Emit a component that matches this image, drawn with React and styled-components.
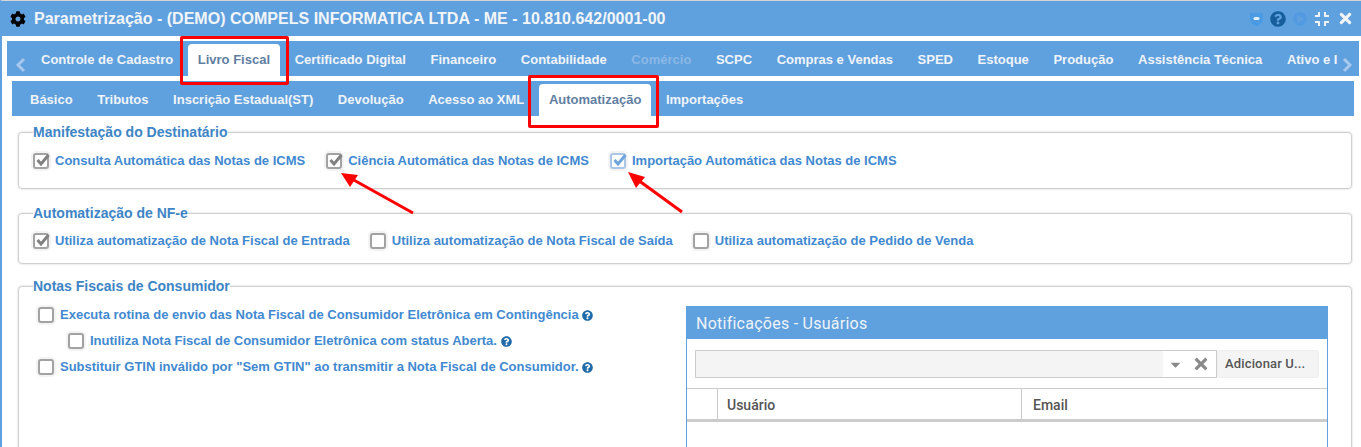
import React from 'react';
import styled, { createGlobalStyle } from 'styled-components';
import { FaCog, FaQuestionCircle, FaPlayCircle, FaCompress, FaTimes, FaCaretDown } from 'react-icons/fa';

const GlobalStyle = createGlobalStyle`
    html, body {
        margin: 0;
        height: 447px;
        overflow: hidden;
        background: #fff;
        font-family: "Liberation Sans", Arial, sans-serif;
    }
`;

const Window = styled.div`
    position: relative;
    height: 447px;
    box-sizing: border-box;
    border-top: 1px solid #d5d5d5;
    border-left: 2px solid #5fa0de;
    overflow: hidden;
`;

const TitleBar = styled.div`
    height: 35px;
    margin-left: -2px;
    padding: 0 7px 0 10px;
    background: #5fa0de;
    display: flex;
    align-items: center;
    color: #f2f5f8;
`;

const Title = styled.div`
    margin-left: 8px;
    font-size: 16px;
    font-weight: bold;
    letter-spacing: 0.015px;
    flex: 1;
    white-space: nowrap;
`;

const TitleIcons = styled.div`
    display: flex;
    align-items: center;
    gap: 7px;
`;

const IconSlot = styled.span`
    display: flex;
    color: ${p => p.$color || '#f2f5f8'};
    font-size: ${p => p.$size || 16}px;
`;

const MainBar = styled.div`
    height: 35px;
    margin: 5px 0 0 5px;
    width: 1352px;
    background: #5fa0de;
    display: flex;
    align-items: flex-end;
    overflow: hidden;
`;

const SubBar = styled.div`
    height: 35px;
    margin: 5px 0 0 10px;
    width: 1342px;
    background: #5fa0de;
    display: flex;
    align-items: flex-end;
    padding-left: 8px;
    box-sizing: border-box;
`;

const Arrow = styled.div`
    width: ${p => p.$width}px;
    flex: none;
    align-self: stretch;
    display: flex;
    align-items: flex-end;
    padding-bottom: 3px;
    padding-left: ${p => p.$pad || 0}px;
    box-sizing: border-box;
`;

const TabStrip = styled.div`
    flex: 1;
    min-width: 0;
    display: flex;
    align-items: flex-end;
    overflow: hidden;
`;

const Tab = styled.div`
    flex: none;
    height: 32px;
    line-height: 31px;
    padding: 0 10px;
    margin-right: 4.6px;
    font-size: 13px;
    font-weight: bold;
    white-space: nowrap;
    border-radius: 4px 4px 0 0;
    background: ${p => (p.$active ? '#fff' : 'transparent')};
    color: ${p => (p.$active ? '#5f7ea1' : p.$disabled ? '#8ab8e6' : '#f0f4f8')};
`;

const Content = styled.div`
    padding: 8px 9px 0 16px;
`;

const Group = styled.fieldset`
    margin: 0 0 ${p => p.$gapBelow || 14}px;
    padding: ${p => p.$top}px 14px 0;
    height: ${p => p.$height}px;
    box-sizing: border-box;
    border: 1px solid #cfcfcf;
    border-radius: 4px;
    box-shadow: 0 0 2px rgba(0, 0, 0, 0.22);
`;

const Legend = styled.legend`
    padding: 0;
    font-size: 14px;
    font-weight: bold;
    line-height: 16px;
    color: #3d85c6;
`;

const Row = styled.div`
    display: flex;
    align-items: center;
    gap: ${p => p.$gap || 0}px;
`;

const Check = styled.label`
    display: flex;
    align-items: center;
    gap: 6px;
    font-size: 13px;
    font-weight: bold;
    line-height: 18px;
    color: #4189d0;
    white-space: nowrap;
`;

const Box = styled.span`
    flex: none;
    width: 16px;
    height: 16px;
    box-sizing: border-box;
    border: 2px solid ${p => (p.$blue ? '#a9c6e6' : '#a2a2a2')};
    border-radius: 3px;
    background: #fff;
    box-shadow: 0 0 0 2px #f3f3f3;
    position: relative;
    svg {
        position: absolute;
        left: 0;
        top: -3px;
    }
`;

const Split = styled.div`
    display: flex;
    justify-content: space-between;
`;

const Options = styled.div`
    display: flex;
    flex-direction: column;
    gap: 8px;
    padding: 2px 0 0 5px;
`;

const Option = styled.div`
    display: flex;
    align-items: center;
    gap: 3px;
    padding-left: ${p => p.$indent || 0}px;
`;

const Help = styled.span`
    display: flex;
    color: #1f6aa8;
    font-size: 11px;
    margin-left: ${p => p.$gap || 0}px;
`;

const Panel = styled.div`
    width: 642px;
    height: 200px;
    margin-top: 2px;
    margin-right: 9px;
    box-sizing: border-box;
    border: 1px solid #5fa0de;
    flex: none;
`;

const PanelHead = styled.div`
    height: 33px;
    margin: -1px -1px 0;
    padding-left: 10px;
    background: #5fa0de;
    color: #eef3f8;
    font-family: Roboto, sans-serif;
    font-size: 16px;
    line-height: 35px;
    letter-spacing: 0.25px;
`;

const PickerRow = styled.div`
    display: flex;
    padding: 11px 8px 10px;
    height: 49px;
    box-sizing: border-box;
`;

const Picker = styled.div`
    flex: 1;
    display: flex;
    align-items: center;
    justify-content: flex-end;
    gap: 9px;
    padding-right: 6px;
    background: linear-gradient(to right, #f4f4f4 467px, #fff 467px);
    border: 1px solid #ccc;
    color: #8a8a8a;
    font-size: 15px;
    svg + svg {
        font-size: 18px;
    }
`;

const AddButton = styled.div`
    width: 102px;
    box-sizing: border-box;
    padding-left: 7px;
    background: #f4f4f4;
    border: 1px solid #eee;
    border-radius: 3px;
    font-family: Roboto, sans-serif;
    font-size: 13px;
    font-weight: 500;
    line-height: 26px;
    letter-spacing: 0.15px;
    color: #555;
    white-space: nowrap;
`;

const TableHead = styled.div`
    display: grid;
    grid-template-columns: 30px 304px 1fr;
    height: 34px;
    border-top: 1px solid #ccc;
    border-bottom: 3px solid #ccc;
    box-sizing: border-box;
`;

const HeadCell = styled.div`
    padding-left: ${p => p.$pad || 10}px;
    border-left: ${p => (p.$first ? 'none' : '1px solid #ccc')};
    font-family: Roboto, sans-serif;
    font-size: 14px;
    font-weight: 500;
    line-height: 33px;
    color: #555;
`;

const Highlight = styled.div`
    position: absolute;
    left: ${p => p.$x - 2}px;
    top: ${p => p.$y - 1}px;
    width: ${p => p.$w}px;
    height: ${p => p.$h}px;
    box-sizing: border-box;
    border: 3px solid #f00;
    border-radius: 2px;
    pointer-events: none;
`;

const ArrowLayer = styled.svg`
    position: absolute;
    left: -2px;
    top: -1px;
    pointer-events: none;
`;

const Chevron = ({ dir }) => (
    <svg width="12" height="16" viewBox="0 0 12 16">
        <path
            d={dir === 'left' ? 'M9 2 L3 8 L9 14' : 'M3 2 L9 8 L3 14'}
            fill="none"
            stroke="#a5c8ec"
            strokeWidth="3"
        />
    </svg>
);

const ChatBadge = () => (
    <svg width="13" height="14" viewBox="0 0 13 14">
        <path d="M0 1 H13 V7 C13 11 9 13.5 6.5 14 C4 13.5 0 11 0 7 Z" fill="#4a9be3" />
        <rect x="3.5" y="5" width="6" height="3" rx="1.5" fill="#e4eef8" />
    </svg>
);

const Checkbox = ({ checked, blue, children }) => (
    <Check>
        <Box $blue={blue}>
            {checked && (
                <svg width="16" height="16" viewBox="0 0 16 16">
                    <path d="M2.5 8 L6 12 L13.5 3" fill="none" stroke={blue ? '#6ea5dc' : '#808080'} strokeWidth="3" />
                </svg>
            )}
        </Box>
        {children}
    </Check>
);

const mainTabs = ['Controle de Cadastro', 'Livro Fiscal', 'Certificado Digital', 'Financeiro', 'Contabilidade', 'Comércio', 'SCPC', 'Compras e Vendas', 'SPED', 'Estoque', 'Produção', 'Assistência Técnica', 'Ativo e Imobilizado'];
const subTabs = ['Básico', 'Tributos', 'Inscrição Estadual(ST)', 'Devolução', 'Acesso ao XML', 'Automatização', 'Importações'];

export default function App() {
    return (
        <Window>
            <GlobalStyle />
            <TitleBar>
                <IconSlot $color="#000"><FaCog /></IconSlot>
                <Title>Parametrização - (DEMO) COMPELS INFORMATICA LTDA - ME - 10.810.642/0001-00</Title>
                <TitleIcons>
                    <ChatBadge />
                    <IconSlot $color="#175f9c"><FaQuestionCircle /></IconSlot>
                    <IconSlot $color="#529ae2" $size={14}><FaPlayCircle /></IconSlot>
                    <IconSlot><FaCompress /></IconSlot>
                    <IconSlot $size={17}><FaTimes /></IconSlot>
                </TitleIcons>
            </TitleBar>
            <MainBar>
                <Arrow $width={24} $pad={8}><Chevron dir="left" /></Arrow>
                <TabStrip>
                    {mainTabs.map(t => (
                        <Tab key={t} $active={t === 'Livro Fiscal'} $disabled={t === 'Comércio'}>{t}</Tab>
                    ))}
                </TabStrip>
                <Arrow $width={21} $pad={3}><Chevron dir="right" /></Arrow>
            </MainBar>
            <SubBar>
                {subTabs.map(t => (
                    <Tab key={t} $active={t === 'Automatização'}>{t}</Tab>
                ))}
            </SubBar>
            <Content>
                <Group $height={65} $top={12} $gapBelow={16}>
                    <Legend>Manifestação do Destinatário</Legend>
                    <Row $gap={21}>
                        <Checkbox checked>Consulta Automática das Notas de ICMS</Checkbox>
                        <Checkbox checked>Ciência Automática das Notas de ICMS</Checkbox>
                        <Checkbox checked blue>Importação Automática das Notas de ICMS</Checkbox>
                    </Row>
                </Group>
                <Group $height={59} $top={11}>
                    <Legend>Automatização de NF-e</Legend>
                    <Row $gap={20}>
                        <Checkbox checked>Utiliza automatização de Nota Fiscal de Entrada</Checkbox>
                        <Checkbox>Utiliza automatização de Nota Fiscal de Saída</Checkbox>
                        <Checkbox>Utiliza automatização de Pedido de Venda</Checkbox>
                    </Row>
                </Group>
                <Group $height={200} $top={10}>
                    <Legend>Notas Fiscais de Consumidor</Legend>
                    <Split>
                        <Options>
                            <Option>
                                <Checkbox>Executa rotina de envio das Nota Fiscal de Consumidor Eletrônica em Contingência</Checkbox>
                                <Help><FaQuestionCircle /></Help>
                            </Option>
                            <Option $indent={30}>
                                <Checkbox>Inutiliza Nota Fiscal de Consumidor Eletrônica com status Aberta.</Checkbox>
                                <Help $gap={1}><FaQuestionCircle /></Help>
                            </Option>
                            <Option>
                                <Checkbox>Substituir GTIN inválido por "Sem GTIN" ao transmitir a Nota Fiscal de Consumidor.</Checkbox>
                                <Help><FaQuestionCircle /></Help>
                            </Option>
                        </Options>
                        <Panel>
                            <PanelHead>Notificações - Usuários</PanelHead>
                            <PickerRow>
                                <Picker>
                                    <FaCaretDown />
                                    <FaTimes />
                                </Picker>
                                <AddButton>Adicionar U...</AddButton>
                            </PickerRow>
                            <TableHead>
                                <HeadCell $first />
                                <HeadCell $pad={9}>Usuário</HeadCell>
                                <HeadCell $pad={11}>Email</HeadCell>
                            </TableHead>
                        </Panel>
                    </Split>
                </Group>
            </Content>
            <Highlight $x={180} $y={36} $w={109} $h={49} />
            <Highlight $x={528} $y={75} $w={131} $h={53} />
            <ArrowLayer width="1361" height="447">
                <g stroke="#f00" fill="#f00">
                    <line x1="413" y1="213" x2="352" y2="179" strokeWidth="3" />
                    <polygon points="341,173 358,175 350,187" strokeWidth="0" />
                    <line x1="682" y1="212" x2="638" y2="180" strokeWidth="3" />
                    <polygon points="628,172 645,177 636,188" strokeWidth="0" />
                </g>
            </ArrowLayer>
        </Window>
    );
}
